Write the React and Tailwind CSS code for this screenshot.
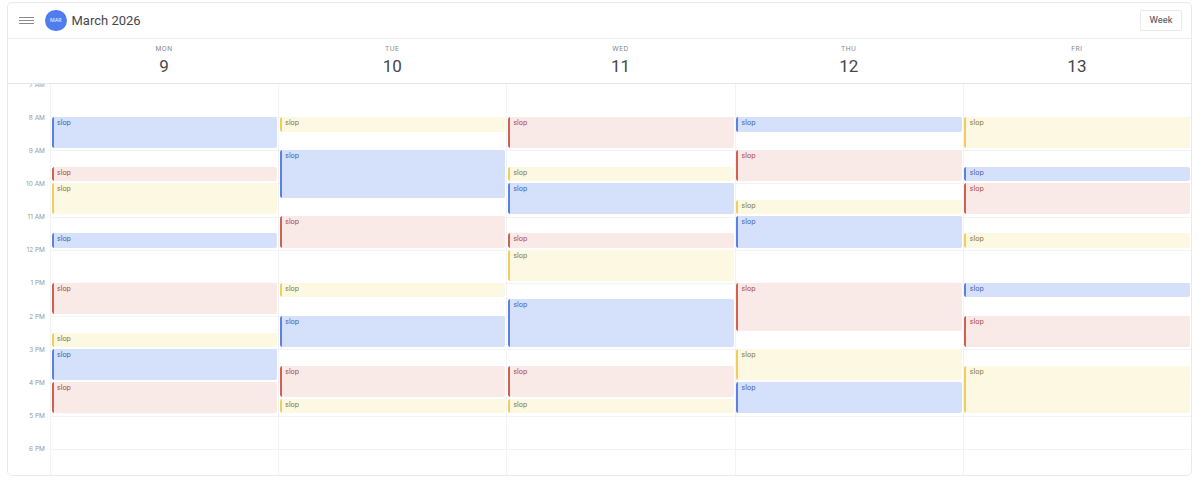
const B = "blue", R = "red", Y = "yellow";
const styles = {
  blue: { box: "bg-[#d5e1fb] text-[#3f5cab]", bar: "bg-[#5a80e4]" },
  red: { box: "bg-[#faeae7] text-[#ab4436]", bar: "bg-[#d0604f]" },
  yellow: { box: "bg-[#fdf8e1] text-[#857632]", bar: "bg-[#f0ce5e]" },
};
const HOUR = 33.17;
const hours = ["7 AM", "8 AM", "9 AM", "10 AM", "11 AM", "12 PM", "1 PM", "2 PM", "3 PM", "4 PM", "5 PM", "6 PM"];
const days = [
  { name: "MON", num: 9, events: [[B, 1, 1], [R, 2.5, 0.5], [Y, 3, 1], [B, 4.5, 0.5], [R, 6, 1], [Y, 7.5, 0.5], [B, 8, 1], [R, 9, 1]] },
  { name: "TUE", num: 10, events: [[Y, 1, 0.5], [B, 2, 1.5], [R, 4, 1], [Y, 6, 0.5], [B, 7, 1], [R, 8.5, 1], [Y, 9.5, 0.5]] },
  { name: "WED", num: 11, events: [[R, 1, 1], [Y, 2.5, 0.5], [B, 3, 1], [R, 4.5, 0.5], [Y, 5, 1], [B, 6.5, 1.5], [R, 8.5, 1], [Y, 9.5, 0.5]] },
  { name: "THU", num: 12, events: [[B, 1, 0.5], [R, 2, 1], [Y, 3.5, 0.5], [B, 4, 1], [R, 6, 1.5], [Y, 8, 1], [B, 9, 1]] },
  { name: "FRI", num: 13, events: [[Y, 1, 1], [B, 2.5, 0.5], [R, 3, 1], [Y, 4.5, 0.5], [B, 6, 0.5], [R, 7, 1], [Y, 8.5, 1.5]] },
];

function Event({ color, start, length }) {
  const s = styles[color];
  return (
    <div
      className={`absolute left-[0.5px] right-[1px] flex overflow-hidden rounded-[2px] ${s.box}`}
      style={{ top: start * HOUR - 0.2, height: length * HOUR - 2 }}
    >
      <div className={`w-[2px] shrink-0 rounded-l-[2px] ${s.bar}`} />
      <span className="pl-[3.5px] pt-[1px] text-[7px] leading-[10px]">slop</span>
    </div>
  );
}

export default function App() {
  return (
    <div className="h-[480px] w-[1200px] overflow-hidden bg-white px-[7px] pt-[2px] font-['Inter','Liberation_Sans',sans-serif]">
      <div className="flex h-[474px] w-[1185px] flex-col overflow-hidden rounded-[5px] border border-[#e8eaed] bg-white">
        <header className="flex h-[36px] shrink-0 items-center border-b border-[#eceef0] pl-[11px] pr-[9px]">
          <div className="flex w-[15px] flex-col gap-[1.5px]">
            <div className="h-[1.5px] bg-[#8a8a8a]" />
            <div className="h-[1.5px] bg-[#8a8a8a]" />
            <div className="h-[1.5px] bg-[#8a8a8a]" />
          </div>
          <div className="ml-[11px] flex h-[21.5px] w-[21.5px] items-center justify-center rounded-full bg-[#4f7df0] text-[5px] font-medium text-[#dfe8ff]">MAR</div>
          <div className="ml-[5px] font-['Roboto','Liberation_Sans',sans-serif] text-[13px] text-[#44474a]">March 2026</div>
          <div className="ml-auto flex h-[21px] w-[42px] items-center justify-center rounded-[2px] border border-[#e8eaed] text-[8.5px] font-medium text-[#55585b]">Week</div>
        </header>
        <div className="flex h-[45px] shrink-0 border-b border-[#e3e5e8] pl-[42px]">
          {days.map((d) => (
            <div key={d.name} className="flex flex-1 flex-col items-center pt-[5px]">
              <div className="text-[6.5px] leading-[10px] tracking-[0.5px] text-[#80858a]">{d.name}</div>
              <div className="mt-[2px] font-['Roboto','Liberation_Sans',sans-serif] text-[17px] leading-[20px] text-[#44474a]">{d.num}</div>
            </div>
          ))}
        </div>
        <div className="flex min-h-0 flex-1 overflow-hidden">
          <div className="w-[42px] shrink-0">
            {hours.map((h) => (
              <div key={h} className="relative" style={{ height: HOUR }}>
                <span className="absolute right-[5px] top-[-4.5px] text-[6.5px] leading-[10px] text-[#999]">{h}</span>
              </div>
            ))}
          </div>
          {days.map((d) => (
            <div key={d.name} className="relative flex-1 border-l border-[#f1f3f4]">
              {hours.map((h, i) => (
                <div key={h} className={i === 0 ? "" : "border-t border-[#f1f3f4]"} style={{ height: HOUR }} />
              ))}
              {d.events.map(([color, start, length], i) => (
                <Event key={i} color={color} start={start} length={length} />
              ))}
            </div>
          ))}
        </div>
      </div>
    </div>
  );
}
